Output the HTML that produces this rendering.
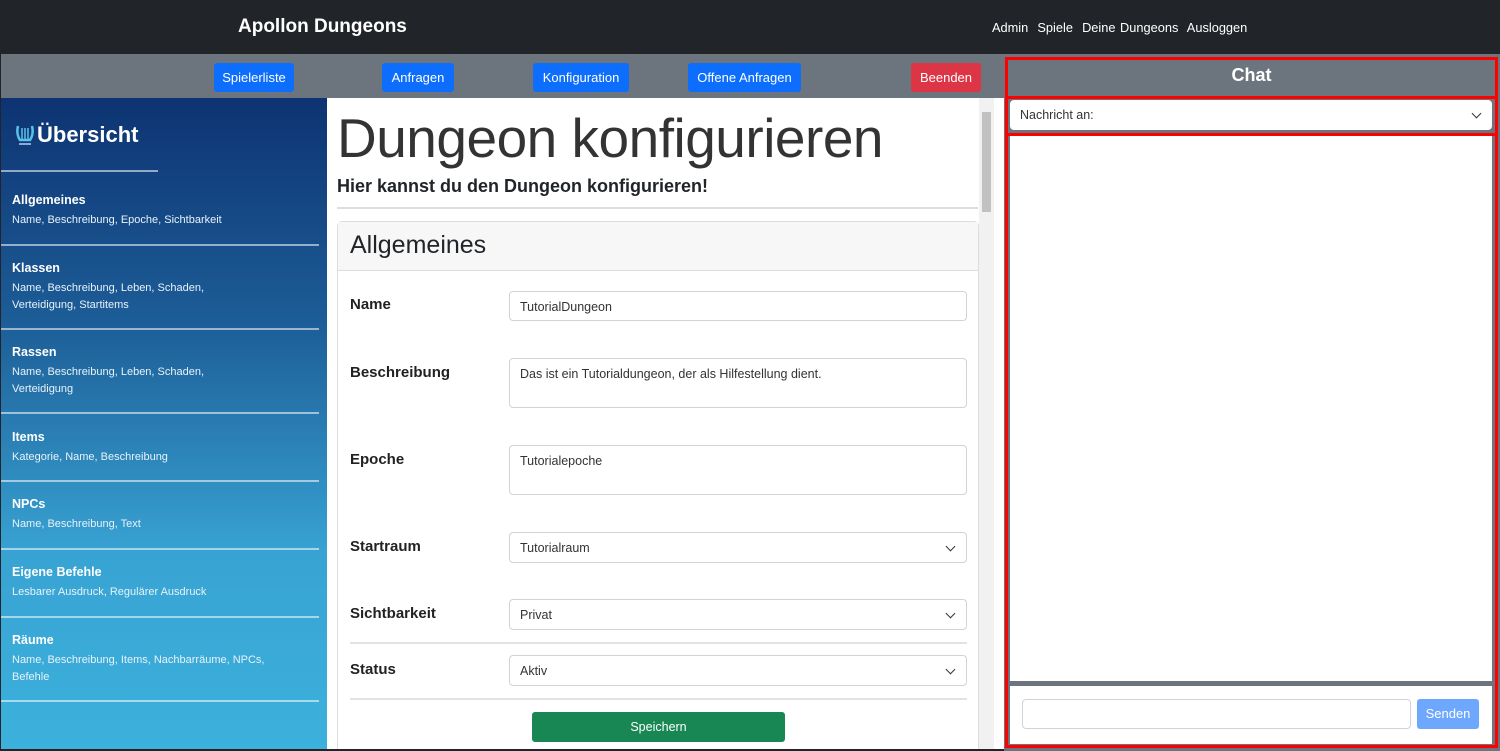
<!DOCTYPE html>
<html><head><meta charset="utf-8"><style>
*{box-sizing:border-box;margin:0;padding:0}
html,body{width:1500px;height:751px;overflow:hidden}
body{font-family:"Liberation Sans",sans-serif;background:#212529;position:relative}
.a{position:absolute}
.nav{left:0;top:0;width:1500px;height:54px;background:#212529}
.btn{position:absolute;color:#fff;font-size:13px;border-radius:3px;text-align:center;line-height:29px;height:29px;top:63px}
.side{left:1px;top:98px;width:326px;height:651px;background:linear-gradient(#0d3372 0%,#1d5e98 35%,#38a3d3 70%,#3cb1dc 100%)}
.side .t{position:absolute;left:11px;color:#fff;font-weight:bold;font-size:12.5px}
.side .s{position:absolute;left:11px;color:#e8f2fa;font-size:11px;line-height:17px;width:250px}
.side .hr{position:absolute;left:0;width:318px;height:2px;background:rgba(255,255,255,.55)}
.lbl{position:absolute;left:350px;font-size:15px;font-weight:bold;color:#222}
.inp{position:absolute;left:509px;width:458px;background:#fff;border:1px solid #ced4da;border-radius:4px;font-size:12.5px;color:#333;padding:8px 10px}
.chev{position:absolute;right:12px;top:10px;width:7px;height:7px;border-right:1.5px solid #333;border-bottom:1.5px solid #333;transform:rotate(45deg)}
</style></head><body>
<div class="a nav"></div>
<div class="a" style="left:238px;top:16px;color:#fff;font-size:19px;font-weight:bold">Apollon Dungeons</div>
<div class="a" style="left:992px;top:20px;color:#fff;font-size:12.8px;word-spacing:1px">Admin&nbsp; Spiele&nbsp; Deine Dungeons&nbsp; Ausloggen</div>
<div class="a" style="left:1px;top:54px;width:1003px;height:45px;background:#6c757d"></div>
<div class="btn" style="left:214px;width:80px;background:#0d6efd">Spielerliste</div>
<div class="btn" style="left:382px;width:72px;background:#0d6efd">Anfragen</div>
<div class="btn" style="left:533px;width:96px;background:#0d6efd">Konfiguration</div>
<div class="btn" style="left:688px;width:113px;background:#0d6efd">Offene Anfragen</div>
<div class="btn" style="left:911px;width:70px;background:#dc3545">Beenden</div>

<div class="a side">
<svg class="a" style="left:14px;top:26px" width="20" height="26" viewBox="0 0 20 26"><path d="M3 2 Q1 10 5 16 L15 16 Q19 10 17 2" fill="none" stroke="#5bc0e8" stroke-width="2.5"/><path d="M7 4V16M10 4V16M13 4V16" stroke="#5bc0e8" stroke-width="1.5"/><rect x="4" y="19" width="12" height="2" fill="#8ad"/></svg>
<div class="a" style="left:36px;top:24px;color:#fff;font-size:22px;font-weight:bold">Übersicht</div>
<div class="a" style="left:0;top:72px;width:157px;height:2px;background:rgba(255,255,255,.55)"></div>
<div class="t" style="top:95px">Allgemeines</div><div class="s" style="top:114px">Name, Beschreibung, Epoche, Sichtbarkeit</div>
<div class="hr" style="top:146px"></div>
<div class="t" style="top:163px">Klassen</div><div class="s" style="top:182px">Name, Beschreibung, Leben, Schaden, Verteidigung, Startitems</div>
<div class="hr" style="top:230px"></div>
<div class="t" style="top:247px">Rassen</div><div class="s" style="top:266px">Name, Beschreibung, Leben, Schaden, Verteidigung</div>
<div class="hr" style="top:314px"></div>
<div class="t" style="top:332px">Items</div><div class="s" style="top:351px">Kategorie, Name, Beschreibung</div>
<div class="hr" style="top:382px"></div>
<div class="t" style="top:399px">NPCs</div><div class="s" style="top:418px">Name, Beschreibung, Text</div>
<div class="hr" style="top:450px"></div>
<div class="t" style="top:467px">Eigene Befehle</div><div class="s" style="top:486px">Lesbarer Ausdruck, Regulärer Ausdruck</div>
<div class="hr" style="top:518px"></div>
<div class="t" style="top:535px">Räume</div><div class="s" style="top:554px;width:260px">Name, Beschreibung, Items, Nachbarräume, NPCs, Befehle</div>
<div class="hr" style="top:602px"></div>
</div>

<div class="a" style="left:327px;top:98px;width:677px;height:651px;background:#fff;overflow:hidden">
<div class="a" style="left:10px;top:8px;font-size:55px;color:#333;letter-spacing:-0.5px">Dungeon konfigurieren</div>
<div class="a" style="left:10px;top:78px;font-size:18px;font-weight:bold;color:#212529">Hier kannst du den Dungeon konfigurieren!</div>
<div class="a" style="left:10px;top:109px;width:641px;height:2px;background:#ddd"></div>
<div class="a" style="left:10px;top:123px;width:642px;height:600px;border:1px solid #ddd;border-radius:5px;background:#fff"></div>
<div class="a" style="left:11px;top:124px;width:640px;height:49px;background:#f7f7f7;border-bottom:1px solid #ddd"></div>
<div class="a" style="left:23px;top:133px;font-size:25px;color:#212529">Allgemeines</div>
<div class="a" style="left:652px;top:0;width:15px;height:651px;background:#f1f1f1"></div>
<div class="a" style="left:655px;top:14px;width:9px;height:100px;background:#c1c1c1"></div>
</div>
<div class="lbl" style="top:296px">Name</div><div class="inp" style="top:291px;height:30px">TutorialDungeon</div>
<div class="lbl" style="top:364px">Beschreibung</div><div class="inp" style="top:358px;height:50px">Das ist ein Tutorialdungeon, der als Hilfestellung dient.</div>
<div class="lbl" style="top:451px">Epoche</div><div class="inp" style="top:445px;height:50px">Tutorialepoche</div>
<div class="lbl" style="top:538px">Startraum</div><div class="inp" style="top:532px;height:31px">Tutorialraum<span class="chev"></span></div>
<div class="lbl" style="top:605px">Sichtbarkeit</div><div class="inp" style="top:599px;height:31px">Privat<span class="chev"></span></div>
<div class="a" style="left:350px;top:642px;width:617px;height:2px;background:#e3e3e3"></div>
<div class="lbl" style="top:661px">Status</div><div class="inp" style="top:655px;height:31px">Aktiv<span class="chev"></span></div>
<div class="a" style="left:350px;top:698px;width:617px;height:2px;background:#e3e3e3"></div>
<div class="a" style="left:532px;top:712px;width:253px;height:30px;background:#198754;border-radius:3px;color:#fff;font-size:12.5px;text-align:center;line-height:30px">Speichern</div>

<div class="a" style="left:1004px;top:54px;width:496px;height:697px;background:#6c757d"></div>
<div class="a" style="left:1005px;top:57px;width:493px;height:42px;border:3px solid #f00"></div>
<div class="a" style="left:1005px;top:65px;width:493px;text-align:center;color:#fff;font-size:18px;font-weight:bold">Chat</div>
<div class="a" style="left:1005px;top:96px;width:493px;height:652px;border:3px solid #f00"></div>
<div class="a" style="left:1010px;top:100px;width:482px;height:30px;background:#fff;border-radius:4px;font-size:12.5px;color:#333;padding:8px 10px">Nachricht an:<span class="chev"></span></div>
<div class="a" style="left:1008px;top:133px;width:487px;height:3px;background:#f00"></div>
<div class="a" style="left:1010px;top:136px;width:482px;height:545px;background:#fff"></div>
<div class="a" style="left:1010px;top:686px;width:482px;height:58px;background:#fff"></div>
<div class="a" style="left:1022px;top:699px;width:389px;height:30px;border:1px solid #ced4da;border-radius:4px"></div>
<div class="a" style="left:1417px;top:699px;width:62px;height:30px;background:#6ea8fe;border-radius:3px;color:#fff;font-size:13px;text-align:center;line-height:30px">Senden</div>
</body></html>
